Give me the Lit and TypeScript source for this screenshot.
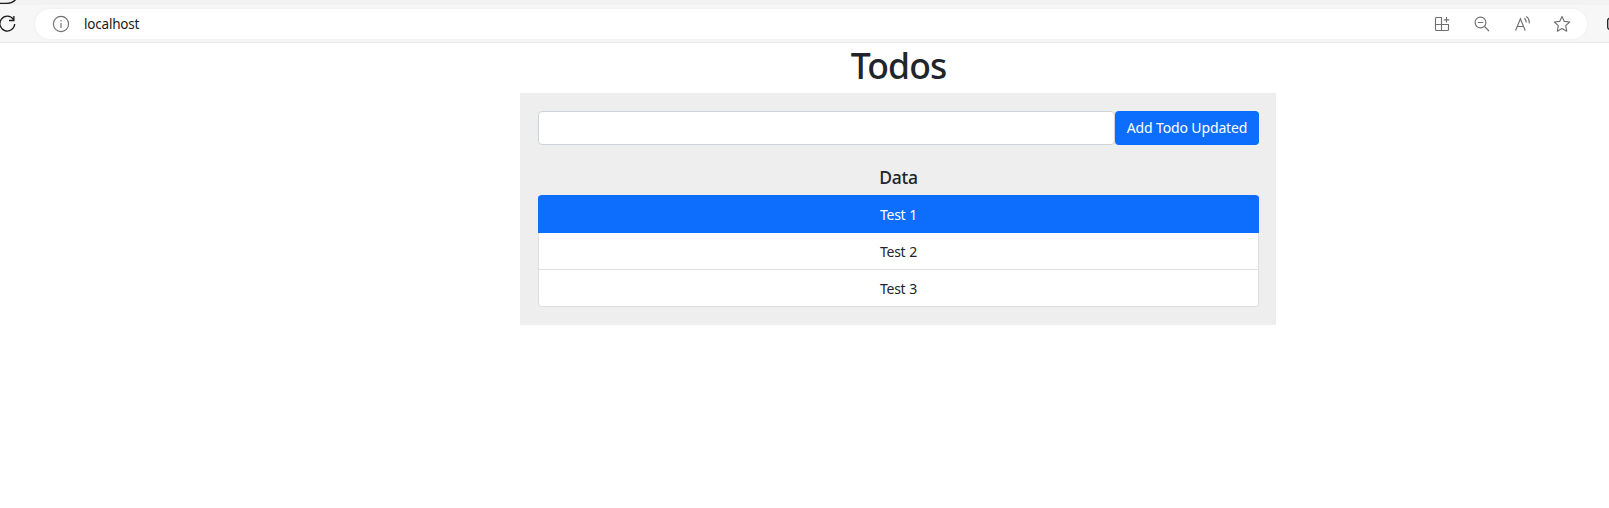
import { LitElement, html, css } from "lit";
import { customElement, state } from "lit/decorators.js";

@customElement("browser-bar")
class BrowserBar extends LitElement {
  static styles = css`
    :host { display: block; }
    .strip { height: 5px; background: #f2f2f2; position: relative; }
    .tab { position: absolute; left: 0; top: 0; display: block; }
    .bar { box-sizing: border-box; height: 38px; background: #f7f7f7; border-bottom: 1px solid #e9e9e9; display: flex; align-items: flex-start; overflow: hidden; }
    .reload { flex: none; width: 35px; height: 37px; }
    .pill { flex: none; box-sizing: border-box; width: 1552px; height: 30px; margin-top: 4px; border-radius: 15px; background: #fff; display: flex; align-items: center; padding-left: 17px; padding-right: 16px; box-shadow: 0 0 3px rgba(0,0,0,.06); }
    .info { flex: none; width: 18px; height: 18px; margin-right: 14px; }
    .url { flex: 1; font: 13.5px/20px "Noto Sans", "Open Sans", sans-serif; letter-spacing: -0.2px; color: #1b1b1b; }
    .actions { display: flex; gap: 22px; }
    .actions svg { width: 18px; height: 18px; display: block; }
    .side { flex: none; margin-left: 20px; width: 2px; height: 37px; }
    svg { fill: none; stroke: #707070; stroke-width: 1.15; }
    .dark { stroke: #1c1c1c; stroke-width: 1.3; }
  `;
  render() {
    return html`
      <div class="strip">
        <svg class="tab dark" width="18" height="5" viewBox="0 0 18 5"><path d="M0 3.4H7Q13 3.2 16-1" /></svg>
      </div>
      <div class="bar">
        <svg class="reload dark" viewBox="0 0 35 37"><path d="M13.4 14.4A7.4 7.4 0 1 0 14.7 19M13.9 11V15.5H9" /></svg>
        <div class="pill">
          <svg class="info" viewBox="0 0 18 18"><circle cx="9" cy="9" r="7.6" /><path d="M9 8V13M9 5V6.4" /></svg>
          <span class="url">localhost</span>
          <div class="actions">
            <svg viewBox="0 0 18 18"><path d="M9 2.5H3.5Q2.5 2.5 2.5 3.5V14.5Q2.5 15.5 3.5 15.5H14.5Q15.5 15.5 15.5 14.5V9.5H2.5M8.5 2.5V15.5M13.5 2V7.5M10.8 4.8H16.2" /></svg>
            <svg viewBox="0 0 18 18"><circle cx="7.5" cy="7.5" r="5.4" /><path d="M11.5 11.5L16 16M4.8 7.5H10.2" /></svg>
            <svg viewBox="0 0 18 18"><path d="M2.6 15.5L7.4 3.7L12.2 15.5M4.2 11.5H10.6M11.4 3.2Q13.2 4.8 13.2 7.4M13.3 1.4Q16.8 4 16.2 8.4" /></svg>
            <svg viewBox="0 0 18 18"><path stroke-linejoin="round" d="M9 1.4L11.3 6.4L16.7 7L12.7 10.7L13.7 16.2L9 13.5L4.3 16.2L5.3 10.7L1.3 7L6.7 6.4Z" /></svg>
          </div>
        </div>
        <svg class="side dark" viewBox="0 0 2 37"><path d="M3 13.4Q.7 13.4 .7 15.5V22Q.7 24.4 3 24.4" /></svg>
      </div>
    `;
  }
}

@customElement("app-root")
class AppRoot extends LitElement {
  static styles = css`
    :host { display: block; height: 508px; overflow: hidden; background: #fff; color: #212529; font: 14px/21.6px "Noto Sans", "Open Sans", sans-serif; }
    .container { width: 756px; margin-left: 520px; text-align: center; }
    h1 { margin: 0; height: 50px; font-size: 35.5px; line-height: 45px; font-weight: 500; }
    .title { letter-spacing: -0.9px; margin-right: -1px; }
    .card { background: #eee; height: 232px; box-sizing: border-box; padding: 18px 17px 18px 18px; }
    form { display: flex; height: 34px; }
    input { flex: 1; min-width: 0; box-sizing: border-box; border: 1px solid #ced4da; border-radius: 4px; background: #fff; font: inherit; padding: 5px 11px; outline: none; }
    button { width: 144px; box-sizing: border-box; border: 0; border-radius: 4px; background: #0d6efd; color: #fff; font: inherit; padding: 0; white-space: nowrap; }
    .button-text { letter-spacing: -0.13px; }
    h2 { margin: 22px 0 7px; font-size: 17.5px; line-height: 21px; font-weight: 500; letter-spacing: -0.25px; }
    ul { list-style: none; margin: 0; padding: 0; border-radius: 4px; overflow: hidden; }
    li { box-sizing: border-box; height: 37px; border: 1px solid #dfdfdf; border-top: 0; background: #fff; line-height: 37px; letter-spacing: -0.3px; word-spacing: 0.5px; }
    li:last-child { border-radius: 0 0 4px 4px; }
    li.active { height: 38px; line-height: 39px; background: #0d6efd; border-color: #0d6efd; color: #fff; }
  `;

  @state() private todos = ["Test 1", "Test 2", "Test 3"];

  render() {
    return html`
      <browser-bar></browser-bar>
      <main class="container">
        <h1><span class="title">Todos</span></h1>
        <section class="card">
          <form @submit=${(e: Event) => e.preventDefault()}>
            <input type="text" />
            <button><span class="button-text">Add Todo Updated</span></button>
          </form>
          <h2>Data</h2>
          <ul>${this.todos.map((t, i) => html`<li class=${i === 0 ? "active" : ""}>${t}</li>`)}</ul>
        </section>
      </main>
    `;
  }
}
